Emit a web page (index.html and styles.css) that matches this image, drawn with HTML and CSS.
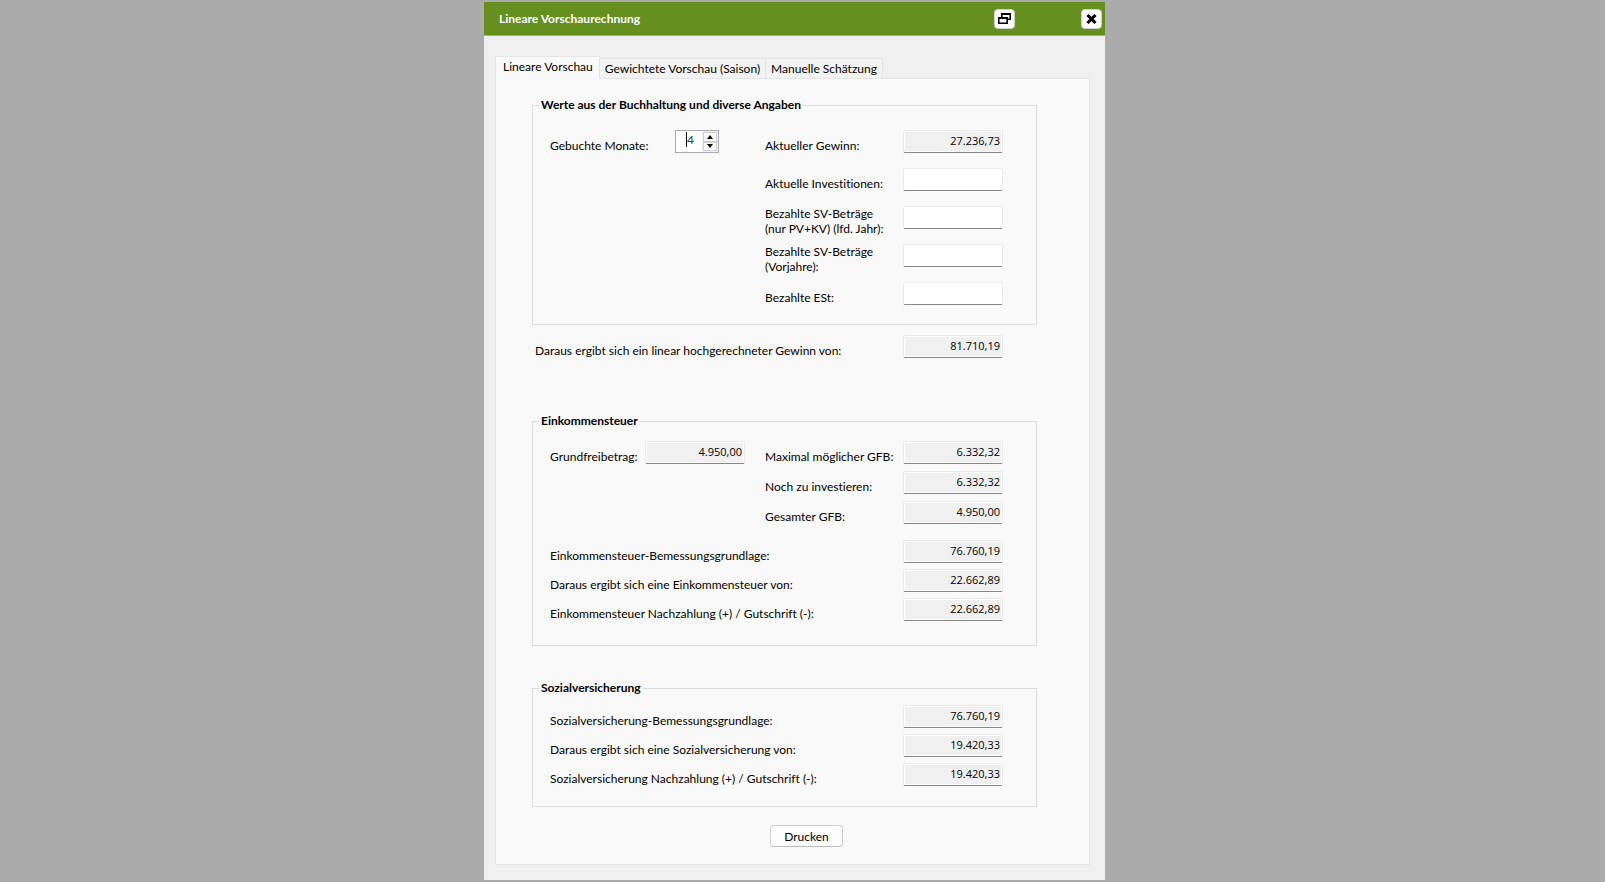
FILE: index.html
```html
<!DOCTYPE html>
<html lang="de">
<head>
  <meta charset="UTF-8" />
  <meta name="viewport" content="width=device-width, initial-scale=1.0"/>
  <title>Lineare Vorschaurechnung</title>
  <link rel="stylesheet" href="styles.css">
</head>
<body>

  <div class="window">
    <header class="titlebar">
      <h1>Lineare Vorschaurechnung</h1>
      <button type="button" class="win-btn" aria-label="Wiederherstellen">
        <svg width="13" height="11" viewBox="0 0 13 11">
          <path fill-rule="evenodd" d="M3 0h10v7h-3v4H0V4h3zM4.600 2v2H10v1.500h1.400V2zM1.600 6v3.500h6.800V6z"/>
        </svg>
      </button>
      <button type="button" class="win-btn" aria-label="Schließen">
        <svg width="11" height="10" viewBox="0 0 11 10" stroke="#000" stroke-width="3">
          <path d="M1.500 1l8 8M9.500 1l-8 8"/>
        </svg>
      </button>
    </header>

    <main class="content">
      <nav class="tabs">
        <button type="button" class="tab active">Lineare Vorschau</button>
        <button type="button" class="tab">Gewichtete Vorschau (Saison)</button>
        <button type="button" class="tab">Manuelle Schätzung</button>
      </nav>

      <form class="panel">
        <fieldset class="group booking">
          <legend>Werte aus der Buchhaltung und diverse Angaben</legend>
          <div class="row">
            <label for="monate">Gebuchte Monate:</label>
            <div class="spin">
              <input type="text" id="monate" inputmode="numeric" value="4">
              <div class="spin-buttons">
                <button type="button" aria-label="Mehr"><svg width="6" height="4" viewBox="0 0 6 4"><path d="M3 0l3 4H0z"/></svg></button>
                <button type="button" aria-label="Weniger"><svg width="6" height="4" viewBox="0 0 6 4"><path d="M0 0h6L3 4z"/></svg></button>
              </div>
            </div>
            <label for="gewinn" class="second">Aktueller Gewinn:</label>
            <input type="text" id="gewinn" class="field" value="27.236,73" readonly>
          </div>
          <div class="row">
            <label for="investitionen" class="second">Aktuelle Investitionen:</label>
            <input type="text" id="investitionen" class="field">
          </div>
          <div class="row">
            <label for="sv-jahr" class="second double">Bezahlte SV-Beträge<br>(nur PV+KV) (lfd. Jahr):</label>
            <input type="text" id="sv-jahr" class="field">
          </div>
          <div class="row">
            <label for="sv-vorjahre" class="second double">Bezahlte SV-Beträge<br>(Vorjahre):</label>
            <input type="text" id="sv-vorjahre" class="field">
          </div>
          <div class="row">
            <label for="est" class="second">Bezahlte ESt:</label>
            <input type="text" id="est" class="field">
          </div>
        </fieldset>

        <div class="row result">
          <label for="hochgerechnet" class="wide">Daraus ergibt sich ein linear hochgerechneter Gewinn von:</label>
          <input type="text" id="hochgerechnet" class="field" value="81.710,19" readonly>
        </div>

        <fieldset class="group tax">
          <legend>Einkommensteuer</legend>
          <div class="rows loose">
            <div class="row">
              <label for="grundfreibetrag">Grundfreibetrag:</label>
              <input type="text" id="grundfreibetrag" class="field allowance" value="4.950,00" readonly>
              <label for="max-gfb" class="second">Maximal möglicher GFB:</label>
              <input type="text" id="max-gfb" class="field" value="6.332,32" readonly>
            </div>
            <div class="row">
              <label for="investieren" class="second">Noch zu investieren:</label>
              <input type="text" id="investieren" class="field" value="6.332,32" readonly>
            </div>
            <div class="row">
              <label for="gesamt-gfb" class="second">Gesamter GFB:</label>
              <input type="text" id="gesamt-gfb" class="field" value="4.950,00" readonly>
            </div>
          </div>
          <div class="rows">
            <div class="row">
              <label for="est-basis" class="wide">Einkommensteuer-Bemessungsgrundlage:</label>
              <input type="text" id="est-basis" class="field" value="76.760,19" readonly>
            </div>
            <div class="row">
              <label for="est-betrag" class="wide">Daraus ergibt sich eine Einkommensteuer von:</label>
              <input type="text" id="est-betrag" class="field" value="22.662,89" readonly>
            </div>
            <div class="row">
              <label for="est-saldo" class="wide">Einkommensteuer Nachzahlung (+) / Gutschrift (-):</label>
              <input type="text" id="est-saldo" class="field" value="22.662,89" readonly>
            </div>
          </div>
        </fieldset>

        <fieldset class="group social">
          <legend>Sozialversicherung</legend>
          <div class="rows">
            <div class="row">
              <label for="sv-basis" class="wide">Sozialversicherung-Bemessungsgrundlage:</label>
              <input type="text" id="sv-basis" class="field" value="76.760,19" readonly>
            </div>
            <div class="row">
              <label for="sv-betrag" class="wide">Daraus ergibt sich eine Sozialversicherung von:</label>
              <input type="text" id="sv-betrag" class="field" value="19.420,33" readonly>
            </div>
            <div class="row">
              <label for="sv-saldo" class="wide">Sozialversicherung Nachzahlung (+) / Gutschrift (-):</label>
              <input type="text" id="sv-saldo" class="field" value="19.420,33" readonly>
            </div>
          </div>
        </fieldset>

        <button type="button" class="print">Drucken</button>
      </form>
    </main>
  </div>

</body>
</html>
```

FILE: styles.css
```css
* {
  box-sizing: border-box;
}

body {
  margin: 0;
  padding: 2px 16px 2px 0;
  min-height: 100vh;
  display: flex;
  justify-content: center;
  background: #ababab;
  color: #000;
  font-family: Lato, "Segoe UI", sans-serif;
  font-size: 12px;
  font-variant-ligatures: none;
  line-height: 15px;
}

button,
input {
  font: inherit;
  color: inherit;
  padding: 0;
}

.window {
  width: 100%;
  max-width: 621px;
  display: flex;
  flex-direction: column;
  background: #f0f0f0;
}

.titlebar {
  display: flex;
  align-items: center;
  height: 34px;
  padding: 0 3px 0 15px;
  background: #659020;
  border-bottom: 1px solid #a5ab9b;
}

.titlebar h1 {
  flex: 1;
  margin: 0;
  font-size: 12px;
  font-weight: bold;
  color: #fff;
}

.win-btn {
  display: flex;
  align-items: center;
  justify-content: center;
  width: 21px;
  height: 20px;
  background: #fdfdfd;
  border: 1px solid #d0d0d0;
  border-radius: 4px;
}

.win-btn + .win-btn {
  margin-left: 66px;
}

.content {
  flex: 1;
  display: flex;
  flex-direction: column;
  padding: 20px 15px 15px 11px;
}

.tabs {
  display: flex;
  align-items: flex-end;
}

.tab {
  height: 20px;
  padding: 0 5px;
  background: #f3f3f3;
  border: 1px solid #e5e5e5;
  border-width: 1px 1px 0 0;
}

.tab.active {
  position: relative;
  height: 23px;
  margin-bottom: -1px;
  padding: 0 6px 3px 7px;
  background: #f9f9f9;
  border-left-width: 1px;
}

.panel {
  flex: 1;
  display: flex;
  flex-direction: column;
  padding: 18px 52px 16px 36px;
  background: #f9f9f9;
  border: 1px solid #e5e5e5;
}

.group {
  min-width: 0;
  margin: 0;
  padding: 12px 33px 15px 17px;
  border: 1px solid #dcdcdc;
}

.group legend {
  height: 16px;
  margin-left: -11px;
  padding: 0 2px;
  font-weight: bold;
}

.row {
  display: grid;
  grid-template-columns: 95px 30px 90px 1fr 100px;
  align-items: end;
}

.row label {
  grid-column: 1 / 3;
  white-space: nowrap;
}

.row label.second {
  grid-column: 4;
}

.row label.wide {
  grid-column: 1 / 5;
}

.row label.double {
  align-self: start;
}

.field {
  grid-column: 5;
  grid-row: 1;
  width: 100px;
  height: 23px;
  padding: 0 2px 3px;
  font-family: "Open Sans", "Segoe UI", sans-serif;
  font-size: 11px;
  text-align: right;
  background: #fff;
  border: 1px solid #ebebeb;
  border-bottom-color: #868686;
  border-radius: 2px;
}

.field:read-only {
  background: #f0f0f0;
  box-shadow: inset 0 0 0 1px #fff;
}

.field.allowance {
  grid-column: 2 / 4;
}

.row label,
.spin {
  grid-row: 1;
}

.booking {
  padding-top: 17px;
  padding-bottom: 4px;
}

.booking .row {
  height: 38px;
  grid-template-rows: 23px;
}

.booking label.double {
  height: 30px;
}

.spin {
  grid-column: 3;
  display: flex;
  width: 44px;
  height: 23px;
  background: #fff;
  border: 1px solid #abadb3;
}

.spin input {
  flex: 1;
  min-width: 0;
  padding: 0 0 4px 11px;
  color: #1c3c78;
  /* text cursor in front of the digit */
  background: linear-gradient(#000, #000) 10px 1px / 1px 15px no-repeat;
  border: 0;
  outline: 0;
}

.spin-buttons {
  display: flex;
  flex-direction: column;
  padding: 1px;
  background: #f0f0f0;
}

.spin-buttons button {
  flex: 1;
  display: flex;
  align-items: center;
  justify-content: center;
  width: 14px;
  background: #fdfdfd;
  border: 1px solid #d0d0d0;
}

.result {
  margin: 10px 34px 55px 3px;
}

.rows {
  display: grid;
  gap: 6px;
}

.rows.loose {
  gap: 7px;
  margin-bottom: 16px;
}

.tax {
  padding-bottom: 24px;
}

.social {
  margin-top: 34px;
  padding-top: 9px;
  padding-bottom: 20px;
}

.print {
  align-self: center;
  width: 73px;
  height: 22px;
  margin: 18px 0 0 44px;
  background: #fdfdfd;
  border: 1px solid #d0d0d0;
  border-bottom-color: #bababa;
  border-radius: 4px;
}
```
